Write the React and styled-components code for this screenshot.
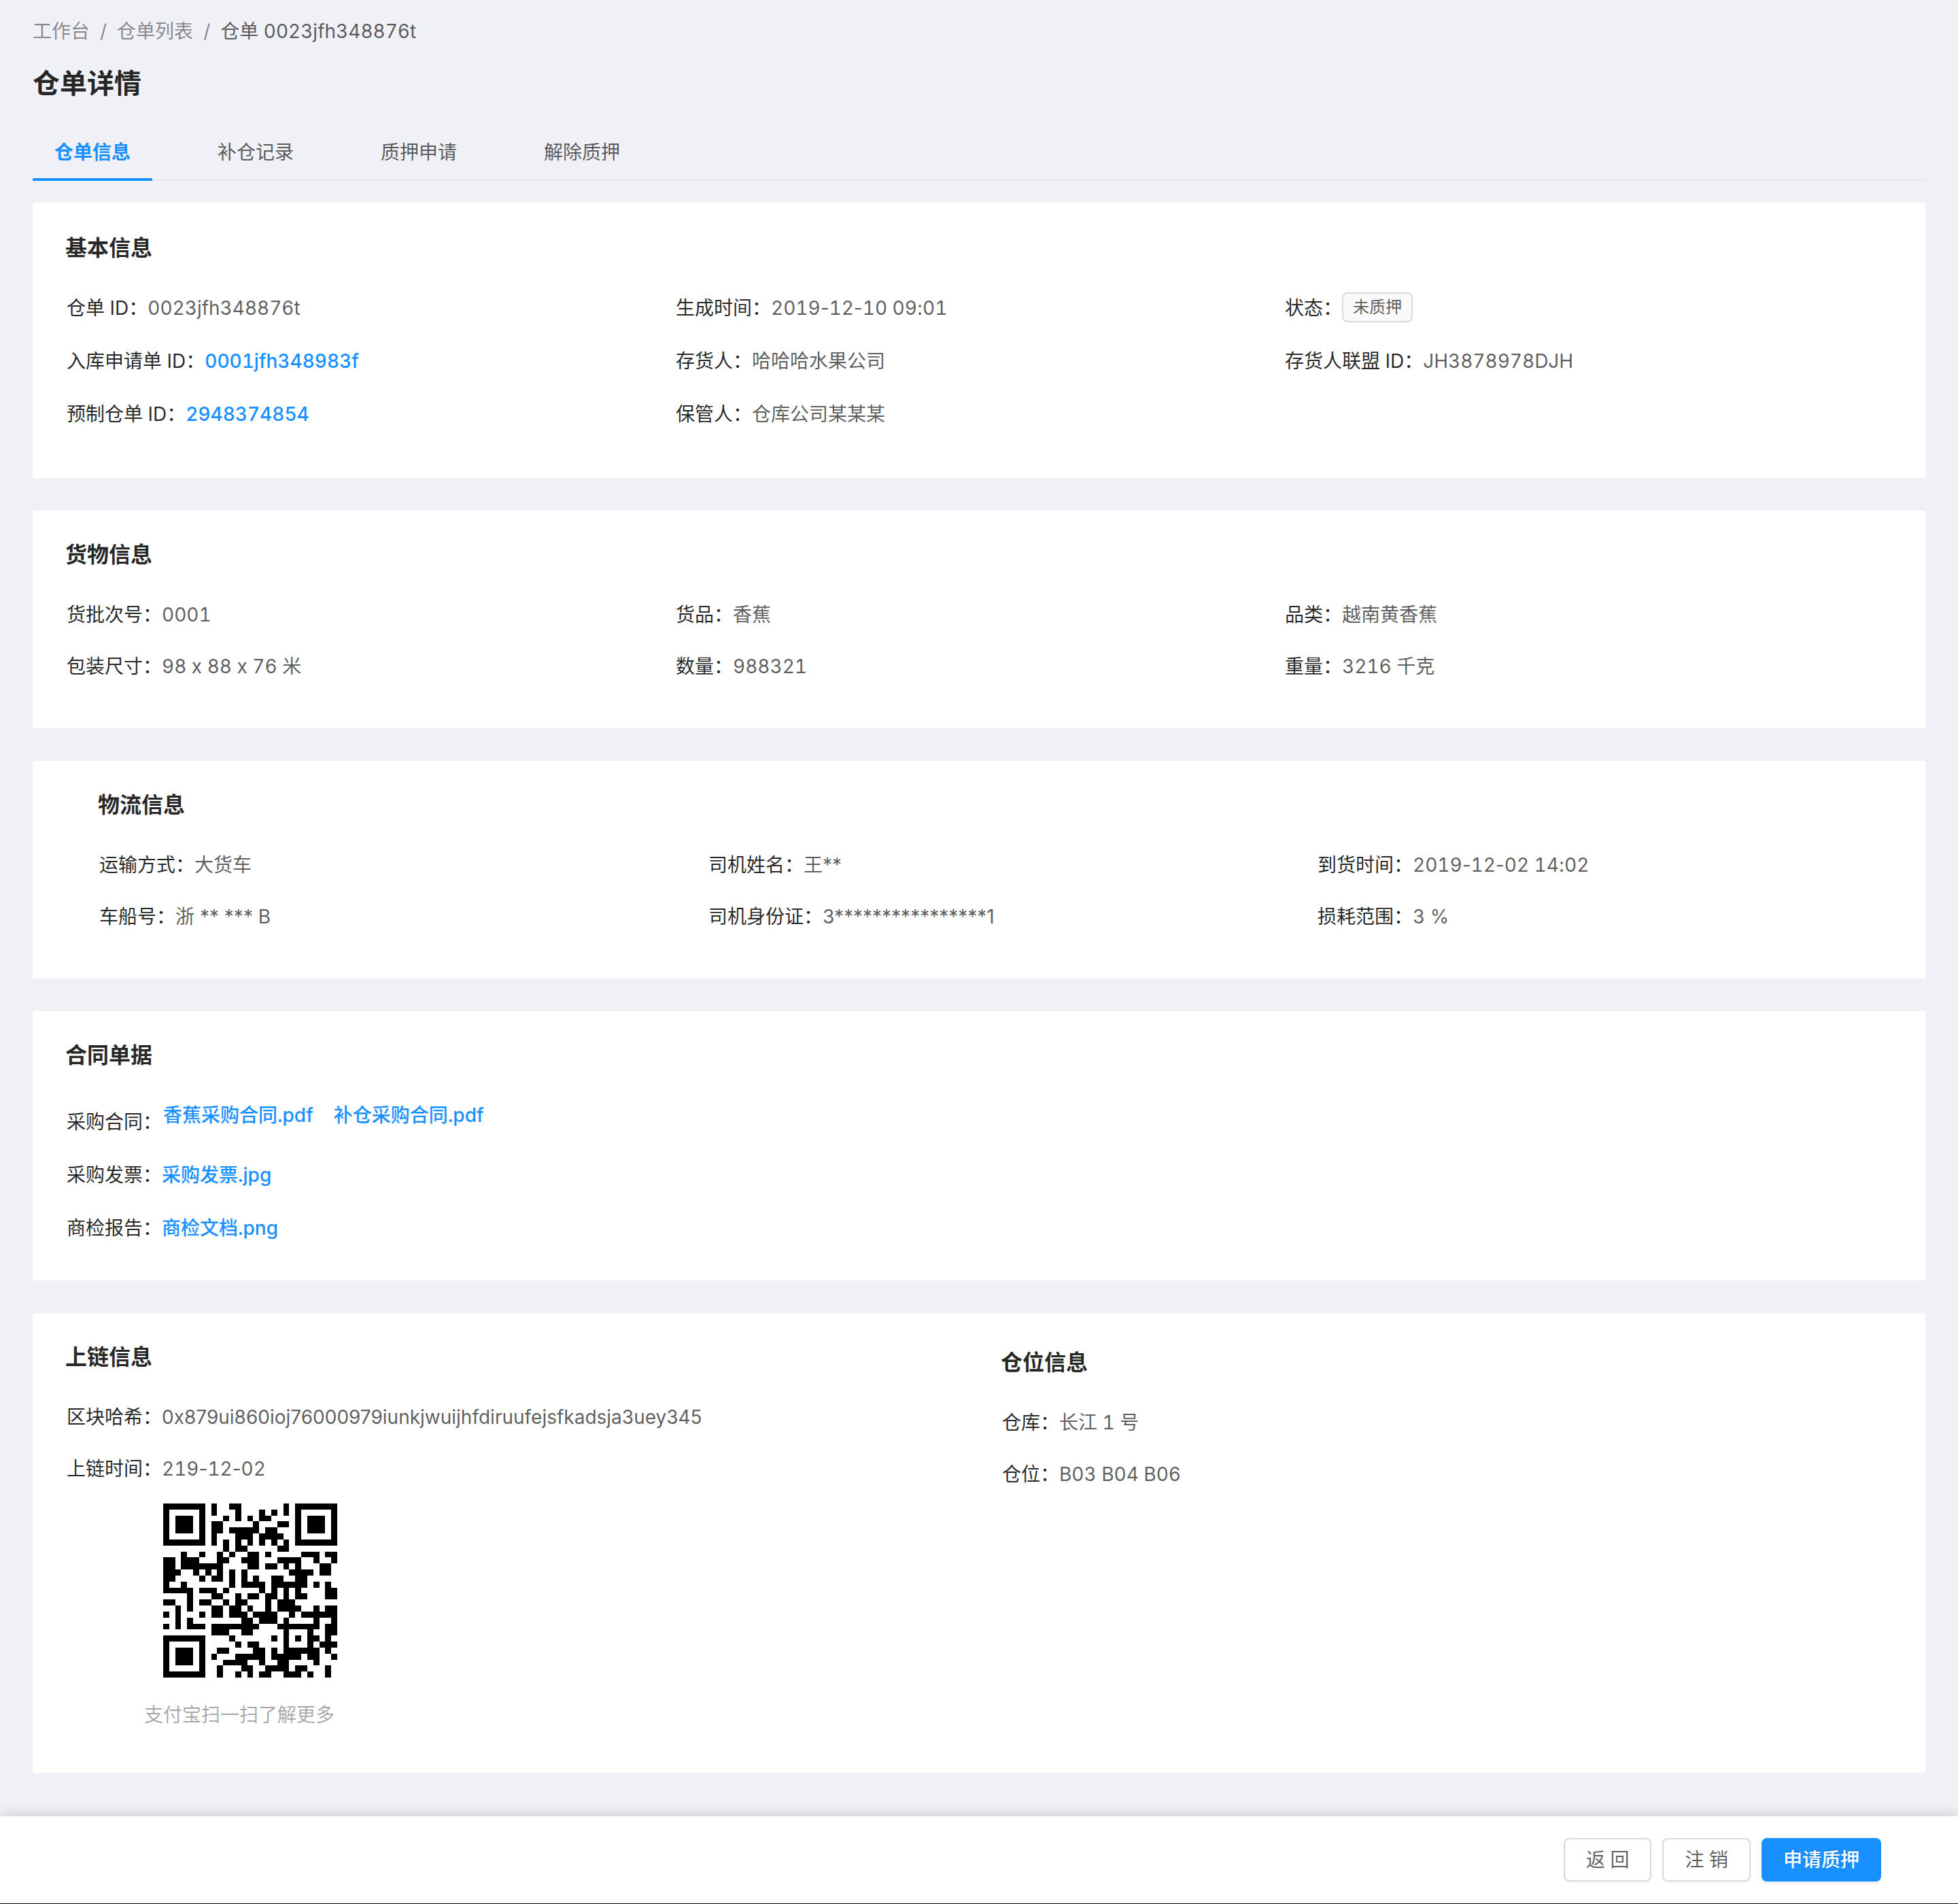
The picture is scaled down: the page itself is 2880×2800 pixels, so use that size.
import React from "react";
import styled, { createGlobalStyle, css } from "styled-components";

const fontStack = `Inter, "Noto Sans CJK SC", sans-serif`;

const GlobalStyle = createGlobalStyle`
  *, *::before, *::after { box-sizing: border-box; }
  body {
    margin: 0;
    background: #f0f1f6;
    color: rgba(0, 0, 0, 0.65);
    font-family: ${fontStack};
    font-size: 28px;
    line-height: 46px;
    font-variant-numeric: tabular-nums;
    font-variant-ligatures: no-contextual;
  }
`;

const Page = styled.div`
  min-height: 100vh;
  display: flex;
  flex-direction: column;
`;

const Main = styled.main`
  padding: 24px 48px 64px;
`;

const Breadcrumb = styled.ol`
  display: flex;
  margin: 0;
  padding: 0;
  list-style: none;
  line-height: 44px;
  color: rgba(0, 0, 0, 0.65);
`;

const Crumb = styled.li`
  & + &::before {
    content: "/";
    margin: 0 15px;
    color: rgba(0, 0, 0, 0.45);
  }
`;

const CrumbLink = styled.a`
  color: rgba(0, 0, 0, 0.45);
  text-decoration: none;
`;

const PageTitle = styled.h1`
  margin: 27px 0 31px;
  font-size: 40px;
  line-height: 56px;
  font-weight: 600;
  color: rgba(0, 0, 0, 0.85);
`;

const TabList = styled.div`
  display: flex;
  gap: 64px;
  margin-bottom: 32px;
  box-shadow: inset 0 -2px 0 #e8e8e8;
`;

const Tab = styled.button`
  height: 84px;
  padding: 4px 32px 0;
  border: 0;
  border-bottom: 4px solid transparent;
  background: none;
  font: inherit;
  color: inherit;
  cursor: pointer;
  ${(p) =>
    p.$active &&
    css`
      border-bottom-color: #1890ff;
      color: #1890ff;
      font-weight: 600;
    `}
`;

const Cards = styled.div`
  display: flex;
  flex-direction: column;
  gap: 48px;
`;

const Card = styled.section`
  padding: ${(p) => p.$top || 40}px 48px ${(p) => p.$bottom || 68}px;
  background: #fff;
  ${(p) =>
    p.$indented &&
    css`
      padding-left: 96px;
      padding-right: 0;
    `}
`;

const SplitCard = styled.div`
  display: grid;
  grid-template-columns: 1fr 1fr;
  gap: 64px;
  padding: 40px 48px 62px;
  background: #fff;
`;

const Column = styled.section`
  padding-top: ${(p) => p.$top || 0}px;
`;

const CardTitle = styled.h2`
  margin: 0 0 40px;
  font-size: 32px;
  line-height: 50px;
  font-weight: 600;
  color: rgba(0, 0, 0, 0.85);
`;

const Fields = styled.dl`
  display: grid;
  grid-template-columns: repeat(${(p) => p.$columns || 1}, 1fr);
  row-gap: ${(p) => (p.$loose ? 32 : 30)}px;
  margin: 0 -2px 0 2px;
`;

const Field = styled.div`
  display: flex;
  align-items: flex-end;
  white-space: nowrap;
`;

const Term = styled.dt`
  color: rgba(0, 0, 0, 0.85);
`;

const Value = styled.dd`
  margin: 0;
`;

const Proportional = styled.span`
  font-variant-numeric: normal;
`;

const TextLink = styled.a`
  color: #1890ff;
  font-weight: 500;
  text-decoration: none;
`;

const FileLinks = styled.div`
  display: flex;
  gap: 30px;
  padding: 0 2px 10px;
`;

const Tag = styled.span`
  display: block;
  margin-bottom: 2px;
  padding: 0 14px;
  border: 2px solid #d9d9d9;
  border-radius: 8px;
  background: #fafafa;
  font-size: 24px;
  line-height: 40px;
`;

const CodeFigure = styled.figure`
  margin: 28px 0 0 116px;
`;

const CodeImage = styled.svg`
  display: block;
  width: 256px;
  height: 256px;
  margin: 0 0 32px 28px;
`;

const CodeCaption = styled.figcaption`
  color: rgba(0, 0, 0, 0.35);
`;

const Footer = styled.footer`
  display: flex;
  justify-content: flex-end;
  gap: 16px;
  margin-top: auto;
  padding: 32px 113px;
  border-bottom: 1px solid #000;
  background: #fff;
  box-shadow: 0 0 20px rgba(0, 21, 41, 0.2);
`;

const Button = styled.button`
  height: 64px;
  padding: 0 31px;
  border: 2px solid #d9d9d9;
  border-radius: 8px;
  background: #fff;
  box-shadow: 0 4px 0 rgba(0, 0, 0, 0.015);
  font: inherit;
  color: rgba(0, 0, 0, 0.65);
  cursor: pointer;
  ${(p) =>
    p.$primary &&
    css`
      padding: 0 30px;
      border-color: #1890ff;
      background: #1890ff;
      box-shadow: 0 4px 0 rgba(0, 0, 0, 0.045);
      color: #fff;
      font-weight: 500;
      text-shadow: 0 -2px 0 rgba(0, 0, 0, 0.12);
    `}
`;

/* One entry per module row; each pair is [first column, run length]. */
const qrRows = [
  [[0, 7], [8, 1], [11, 2], [20, 1], [22, 7]],
  [[0, 1], [6, 1], [8, 1], [12, 1], [16, 1], [18, 1], [20, 1], [22, 1], [28, 1]],
  [[0, 1], [2, 3], [6, 1], [10, 1], [12, 1], [14, 1], [16, 2], [22, 1], [24, 3], [28, 1]],
  [[0, 1], [2, 3], [6, 1], [8, 2], [15, 1], [19, 2], [22, 1], [24, 3], [28, 1]],
  [[0, 1], [2, 3], [6, 1], [8, 2], [11, 5], [17, 2], [22, 1], [24, 3], [28, 1]],
  [[0, 1], [6, 1], [8, 1], [12, 3], [16, 4], [22, 1], [28, 1]],
  [[0, 7], [8, 1], [10, 1], [12, 1], [14, 1], [16, 1], [18, 1], [20, 1], [22, 7]],
  [[10, 1], [12, 2], [19, 2]],
  [[3, 1], [6, 1], [9, 1], [11, 1], [14, 2], [17, 1], [23, 3], [27, 2]],
  [[0, 2], [3, 3], [9, 2], [13, 3], [19, 4], [25, 1], [28, 1]],
  [[0, 2], [3, 7], [14, 2], [17, 2], [20, 1], [22, 1], [26, 2]],
  [[0, 3], [5, 1], [7, 1], [9, 1], [11, 1], [13, 1], [21, 4], [26, 2]],
  [[0, 2], [6, 1], [8, 2], [11, 1], [13, 1], [15, 1], [18, 2], [22, 2]],
  [[0, 1], [3, 1], [11, 1], [13, 4], [18, 6], [25, 1], [27, 1]],
  [[0, 5], [6, 3], [10, 1], [16, 1], [18, 1], [20, 1], [22, 1], [27, 2]],
  [[4, 1], [8, 2], [12, 1], [14, 2], [17, 2], [20, 1], [22, 2], [27, 2]],
  [[0, 2], [4, 1], [6, 2], [10, 1], [12, 2], [17, 1], [19, 3]],
  [[2, 1], [4, 1], [8, 2], [11, 2], [14, 1], [17, 1], [19, 4], [25, 1], [27, 2]],
  [[0, 1], [2, 1], [6, 1], [8, 2], [11, 3], [15, 4], [21, 1], [23, 6]],
  [[2, 1], [4, 1], [13, 2], [16, 3], [20, 1], [25, 1], [28, 1]],
  [[0, 1], [2, 1], [4, 3], [8, 8], [19, 7], [27, 2]],
  [[8, 3], [13, 2], [20, 1], [24, 1], [27, 2]],
  [[0, 7], [11, 1], [18, 1], [20, 1], [22, 1], [24, 2], [27, 1]],
  [[0, 1], [6, 1], [12, 1], [14, 2], [20, 1], [24, 1], [26, 3]],
  [[0, 1], [2, 3], [6, 1], [9, 2], [15, 2], [18, 1], [20, 6], [27, 1]],
  [[0, 1], [2, 3], [6, 1], [8, 1], [12, 5], [18, 5], [24, 2], [28, 1]],
  [[0, 1], [2, 3], [6, 1], [10, 4], [16, 1], [19, 2], [25, 1]],
  [[0, 1], [6, 1], [9, 1], [13, 2], [17, 4], [22, 2], [27, 1]],
  [[0, 7], [9, 1], [12, 1], [14, 1], [16, 2], [20, 3], [24, 1], [27, 1]],
];

function QrCode() {
  const d = qrRows
    .map((runs, y) => runs.map(([x, w]) => `M${x} ${y}h${w}v1h-${w}z`).join(""))
    .join("");
  return (
    <CodeImage viewBox="0 0 29 29" shapeRendering="crispEdges" role="img" aria-label="二维码">
      <path d={d} fill="#000" />
    </CodeImage>
  );
}

function Item({ label, children }) {
  return (
    <Field>
      <Term>{label}：</Term>
      <Value>{children}</Value>
    </Field>
  );
}

/* Tabular digits with proportional hyphens and colons between them. */
function Timestamp({ value }) {
  return (
    <time>
      {value
        .split(/([-:])/)
        .map((part, i) => (i % 2 ? <Proportional key={i}>{part}</Proportional> : part))}
    </time>
  );
}

const tabs = ["仓单信息", "补仓记录", "质押申请", "解除质押"];

export default function App() {
  const [active, setActive] = React.useState(0);
  return (
    <Page>
      <GlobalStyle />
      <Main>
        <nav>
          <Breadcrumb>
            <Crumb><CrumbLink href="#workbench">工作台</CrumbLink></Crumb>
            <Crumb><CrumbLink href="#list">仓单列表</CrumbLink></Crumb>
            <Crumb>仓单 0023jfh348876t</Crumb>
          </Breadcrumb>
        </nav>
        <PageTitle>仓单详情</PageTitle>
        <TabList role="tablist">
          {tabs.map((name, i) => (
            <Tab
              key={name}
              type="button"
              role="tab"
              aria-selected={i === active}
              $active={i === active}
              onClick={() => setActive(i)}
            >
              {name}
            </Tab>
          ))}
        </TabList>

        <Cards>
          <Card $top={42} $bottom={71}>
            <CardTitle>基本信息</CardTitle>
            <Fields $columns={3} $loose>
              <Item label="仓单 ID">0023jfh348876t</Item>
              <Item label="生成时间"><Timestamp value="2019-12-10 09:01" /></Item>
              <Item label="状态"><Tag>未质押</Tag></Item>
              <Item label="入库申请单 ID"><TextLink href="#inbound">0001jfh348983f</TextLink></Item>
              <Item label="存货人">哈哈哈水果公司</Item>
              <Item label="存货人联盟 ID">JH3878978DJH</Item>
              <Item label="预制仓单 ID"><TextLink href="#draft">2948374854</TextLink></Item>
              <Item label="保管人">仓库公司某某某</Item>
            </Fields>
          </Card>

          <Card>
            <CardTitle>货物信息</CardTitle>
            <Fields $columns={3}>
              <Item label="货批次号">0001</Item>
              <Item label="货品">香蕉</Item>
              <Item label="品类">越南黄香蕉</Item>
              <Item label="包装尺寸">98 x 88 x 76 米</Item>
              <Item label="数量">988321</Item>
              <Item label="重量">3216 千克</Item>
            </Fields>
          </Card>

          <Card $indented>
            <CardTitle>物流信息</CardTitle>
            <Fields $columns={3}>
              <Item label="运输方式">大货车</Item>
              <Item label="司机姓名"><Proportional>王**</Proportional></Item>
              <Item label="到货时间"><Timestamp value="2019-12-02 14:02" /></Item>
              <Item label="车船号"><Proportional>浙 ** *** B</Proportional></Item>
              <Item label="司机身份证"><Proportional>3****************1</Proportional></Item>
              <Item label="损耗范围">3 %</Item>
            </Fields>
          </Card>

          <Card $bottom={54}>
            <CardTitle>合同单据</CardTitle>
            <Fields $loose>
              <Item label="采购合同">
                <FileLinks>
                  <TextLink href="#contract-banana">香蕉采购合同.pdf</TextLink>
                  <TextLink href="#contract-refill">补仓采购合同.pdf</TextLink>
                </FileLinks>
              </Item>
              <Item label="采购发票"><TextLink href="#invoice">采购发票.jpg</TextLink></Item>
              <Item label="商检报告"><TextLink href="#inspection">商检文档.png</TextLink></Item>
            </Fields>
          </Card>

          <SplitCard>
            <Column>
              <CardTitle>上链信息</CardTitle>
              <Fields>
                <Item label="区块哈希">
                  <Proportional>0x879ui860ioj76000979iunkjwuijhfdiruufejsfkadsja3uey345</Proportional>
                </Item>
                <Item label="上链时间"><Timestamp value="219-12-02" /></Item>
              </Fields>
              <CodeFigure>
                <QrCode />
                <CodeCaption>支付宝扫一扫了解更多</CodeCaption>
              </CodeFigure>
            </Column>
            <Column $top={8}>
              <CardTitle>仓位信息</CardTitle>
              <Fields>
                <Item label="仓库">长江 1 号</Item>
                <Item label="仓位">B03 B04 B06</Item>
              </Fields>
            </Column>
          </SplitCard>
        </Cards>
      </Main>
      <Footer>
        <Button type="button">返 回</Button>
        <Button type="button">注 销</Button>
        <Button type="button" $primary>申请质押</Button>
      </Footer>
    </Page>
  );
}
